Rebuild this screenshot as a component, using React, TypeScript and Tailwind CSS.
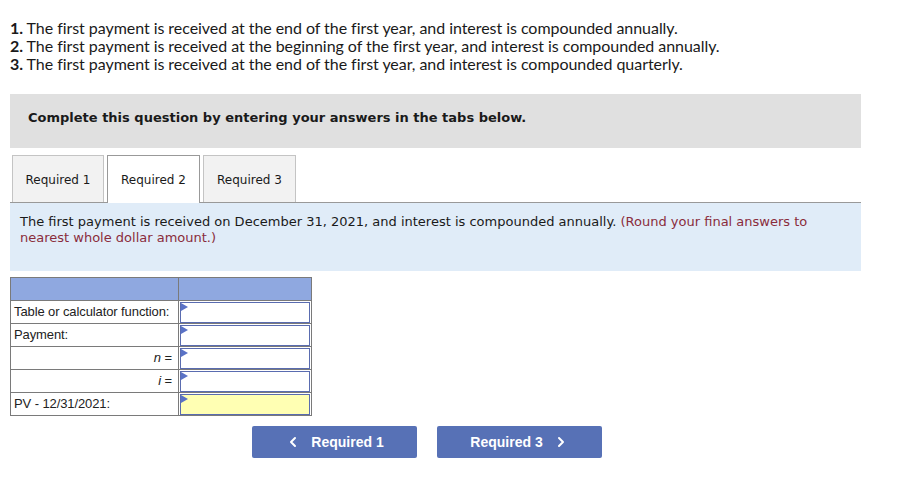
import { ChevronLeft, ChevronRight } from "lucide-react";

const verdana = { fontFamily: '"DejaVu Sans", Verdana, sans-serif' };

function InputCell({ yellow }: { yellow?: boolean }) {
  return (
    <td className="relative h-[23px] border border-[#7a7a7a] p-0">
      <div
        className={`relative mx-[1px] h-[21px] border border-[#5a6cb0] ${yellow ? "bg-[#ffffb3]" : "bg-white"}`}
      >
        <svg className="absolute left-0 top-0" width="7" height="8" viewBox="0 0 7 8">
          <path d="M0 0 L7 4 L0 8 Z" fill="#5a72c6" />
        </svg>
      </div>
    </td>
  );
}

const rows = [
  { label: "Table or calculator function:", align: "left" },
  { label: "Payment:", align: "left" },
  { label: "n =", align: "right", italic: "n" },
  { label: "i =", align: "right", italic: "i" },
  { label: "PV - 12/31/2021:", align: "left", yellow: true },
];

export default function App() {
  return (
    <div className="w-[900px] h-[478px] bg-white px-[10px] pt-[19px] text-[#1a1a1a]">
      <div className="text-[16px] leading-[18px] tracking-[-0.05px] [font-variant-ligatures:none]" style={{ fontFamily: "Lato, sans-serif" }}>
        <p><b>1.</b> The first payment is received at the end of the first year, and interest is compounded annually.</p>
        <p><b>2.</b> The first payment is received at the beginning of the first year, and interest is compounded annually.</p>
        <p><b>3.</b> The first payment is received at the end of the first year, and interest is compounded quarterly.</p>
      </div>

      <div className="mt-[21px] w-[851px] h-[54px] bg-[#e0e0e0] pt-[14px] pl-[18px]">
        <p className="text-[13px] font-bold" style={verdana}>
          Complete this question by entering your answers in the tabs below.
        </p>
      </div>

      <div className="mt-[7px] w-[851px] flex items-end gap-[3px] pl-[2px] border-b border-[#999]" style={verdana}>
        <div className="w-[92px] h-[47px] bg-[#f2f2f2] border border-b-0 border-[#c4c4c4] flex items-center justify-center text-[12px] pt-[1px]">Required 1</div>
        <div className="w-[93px] h-[48px] bg-white border border-b-0 border-[#999] flex items-center justify-center text-[12px] -mb-px">Required 2</div>
        <div className="w-[93px] h-[47px] bg-[#f2f2f2] border border-b-0 border-[#c4c4c4] flex items-center justify-center text-[12px] pt-[1px]">Required 3</div>
      </div>

      <div className="w-[851px] h-[68px] bg-[#e0ecf8] px-[10px] pt-[11px] text-[13px] leading-[16px]" style={verdana}>
        The first payment is received on December 31, 2021, and interest is compounded annually.{" "}
        <span className="text-[#8a2c3c]">(Round your final answers to nearest whole dollar amount.)</span>
      </div>

      <table className="mt-[6px] border-collapse text-[13px]" style={{ fontFamily: '"Liberation Sans", Arial, sans-serif' }}>
        <tbody>
          <tr className="h-[23px] bg-[#8fa8e0]">
            <td className="w-[168px] border border-[#7a7a7a]"></td>
            <td className="w-[133px] border border-[#7a7a7a]"></td>
          </tr>
          {rows.map((r) => (
            <tr key={r.label}>
              <td className={`h-[23px] border border-[#7a7a7a] px-[3px] text-[#222] tracking-[-0.1px] ${r.align === "right" ? "text-right pr-[6px]" : ""}`}>
                {r.italic ? (
                  <>
                    <i>{r.italic}</i> =
                  </>
                ) : (
                  r.label
                )}
              </td>
              <InputCell yellow={r.yellow} />
            </tr>
          ))}
        </tbody>
      </table>

      <div className="mt-[10px] flex gap-[20px] pl-[242px]" style={{ fontFamily: '"Liberation Sans", Arial, sans-serif' }}>
        <button className="w-[165px] h-[32px] bg-[#5771b6] rounded-[2px] text-white font-bold text-[14px] flex items-center justify-center gap-[10px]">
          <ChevronLeft size={16} strokeWidth={3} />
          <span>Required 1</span>
        </button>
        <button className="w-[165px] h-[32px] bg-[#5771b6] rounded-[2px] text-white font-bold text-[14px] flex items-center justify-center gap-[10px]">
          <span>Required 3</span>
          <ChevronRight size={16} strokeWidth={3} />
        </button>
      </div>
    </div>
  );
}
